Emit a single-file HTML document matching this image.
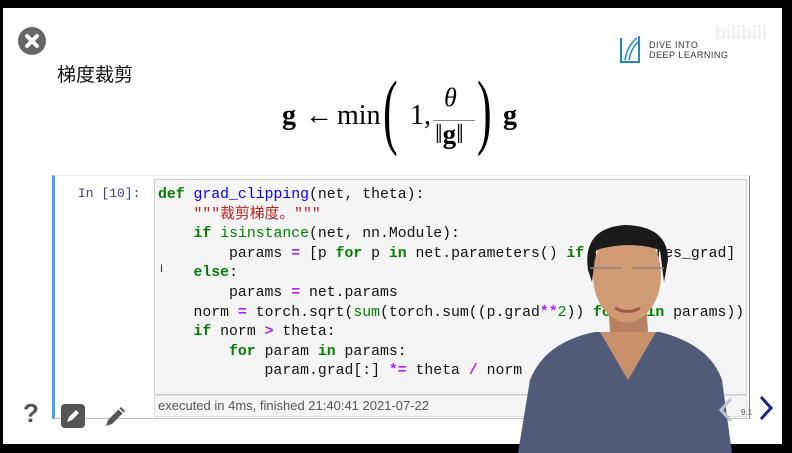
<!DOCTYPE html>
<html><head><meta charset="utf-8"><style>
*{margin:0;padding:0;box-sizing:border-box}
body{width:792px;height:453px;background:#000;position:relative;overflow:hidden;font-family:"Liberation Sans","Noto Sans CJK SC",sans-serif}
#w{position:absolute;left:3px;top:8px;width:779px;height:436px;background:#fff}
.a{position:absolute}
#title{left:57px;top:60px;font-size:19px;color:#111}
.fm{font-family:"Liberation Serif",serif;color:#000;white-space:nowrap;position:absolute}
#cell{left:52px;top:175px;width:698px;height:244px;border-left:3px solid #42a5f5;border-right:1px solid #888;border-bottom:1px solid #bbb;border-top:1px solid #eee}
#inp{left:154px;top:179px;width:593px;height:216px;background:#f5f5f5;border:1px solid #ccc}
#out{left:154px;top:395px;width:593px;height:22px;background:#f5f5f5;border:1px solid #ddd;border-top:1px solid #e0e0e0;font-size:13px;color:#555;padding:2px 3px}
#prompt{left:78px;top:186px;font-family:"Liberation Mono",monospace;font-size:13px;color:#303f9f}
pre{position:absolute;left:158px;top:186px;font-family:"Liberation Mono","Noto Sans CJK SC",monospace;font-size:14.8px;line-height:19.6px;color:#111}
.k{color:#008000;font-weight:bold}.f{color:#0000ff}.s{color:#ba2121}.o{color:#aa22ff;font-weight:bold}.b{color:#008000}
</style></head><body>
<div id="w"></div>
<svg class="a" style="left:18px;top:27px" width="28" height="28"><circle cx="14" cy="14" r="14" fill="#666"/><path d="M9 9L19 19M19 9L9 19" stroke="#fff" stroke-width="4" stroke-linecap="round"/></svg>
<div class="a" id="title">梯度裁剪</div>
<svg class="a" style="left:619px;top:34px" width="22" height="30"><path d="M2 4V28H20V2" fill="none" stroke="#1e8bc3" stroke-width="2"/><path d="M6 26Q8 12 18 4M10 26Q12 14 19 8" fill="none" stroke="#1e8bc3" stroke-width="1.5"/></svg>
<div class="a" style="left:649px;top:40px;font-size:9px;color:#333;line-height:10px;letter-spacing:0.5px">DIVE INTO<br>DEEP LEARNING</div>
<div class="a" style="left:715px;top:23px;font-size:18px;color:#eee;font-weight:bold">bilibili</div>
<div class="fm" style="left:282px;top:100px;font-size:28px"><b>g</b></div>
<div class="fm" style="left:305px;top:100px;font-size:28px">←</div>
<div class="fm" style="left:337px;top:100px;font-size:28px">min</div>
<div class="fm" style="left:383px;top:70px;font-size:44px;transform:scaleY(1.9);transform-origin:top;line-height:44px">(</div>
<div class="fm" style="left:410px;top:100px;font-size:28px">1,</div>
<div class="fm" style="left:444px;top:83px;font-size:26px"><i>θ</i></div>
<div class="a" style="left:433px;top:120px;width:42px;height:1px;background:#888"></div>
<div class="fm" style="left:435px;top:119px;font-size:27px">‖<b>g</b>‖</div>
<div class="fm" style="left:477px;top:70px;font-size:44px;transform:scaleY(1.9);transform-origin:top;line-height:44px">)</div>
<div class="fm" style="left:503px;top:100px;font-size:28px"><b>g</b></div>
<div class="a" id="cell"></div>
<div class="a" id="inp"></div>
<div class="a" id="out">executed in 4ms, finished 21:40:41 2021-07-22</div>
<div class="a" id="prompt">In [10]:</div>
<pre><span class="k">def</span> <span class="f">grad_clipping</span>(net, theta):
    <span class="s">"""裁剪梯度。"""</span>
    <span class="k">if</span> <span class="b">isinstance</span>(net, nn.Module):
        params <span class="o">=</span> [p <span class="k">for</span> p <span class="k">in</span> net.parameters() <span class="k">if</span> p.requires_grad]
    <span class="k">else</span>:
        params <span class="o">=</span> net.params
    norm <span class="o">=</span> torch.sqrt(<span class="b">sum</span>(torch.sum((p.grad<span class="o">**</span><span class="b">2</span>)) <span class="k">for</span> p <span class="k">in</span> params))
    <span class="k">if</span> norm <span class="o">&gt;</span> theta:
        <span class="k">for</span> param <span class="k">in</span> params:
            param.grad[:] <span class="o">*=</span> theta <span class="o">/</span> norm</pre>
<div class="a" style="left:160px;top:263px;font-size:11px;color:#333">I</div>
<div class="a" style="left:23px;top:398px;font-size:26px;font-weight:bold;color:#555">?</div>
<svg class="a" style="left:61px;top:404px" width="24" height="24"><rect width="24" height="24" rx="4" fill="#555"/><path d="M6 18L8 13L15 6L18 9L11 16Z" fill="#fff"/></svg>
<svg class="a" style="left:104px;top:404px" width="24" height="24"><path d="M2 22L4 16L17 3L21 7L8 20Z" fill="#555"/><path d="M15 5L19 9" stroke="#fff" stroke-width="1.5"/></svg>
<!-- person -->
<svg class="a" style="left:500px;top:220px" width="260" height="233">
<path d="M18 233L30 160Q45 122 95 112L160 112Q210 125 222 160L232 233Z" fill="#4f5b78"/>
<path d="M100 112L128 160L156 112Z" fill="#c9906c"/>
<path d="M108 80L110 112L148 112L146 80Z" fill="#b88060"/>
<ellipse cx="127" cy="55" rx="34" ry="47" fill="#d09a75"/>
<path d="M88 50Q82 8 125 5Q168 6 168 40L164 62L160 30Q130 20 96 30L92 62Z" fill="#1a1a1a"/>
<path d="M90 48H122M132 48H164" stroke="#888" stroke-width="1.5"/>
<path d="M115 88Q128 95 140 88" stroke="#a05a4a" stroke-width="3" fill="none"/>
</svg>
<svg class="a" style="left:717px;top:397px" width="18" height="26"><path d="M14 2L4 13L14 24" fill="none" stroke="#c0c4d0" stroke-width="3"/></svg>
<div class="a" style="left:741px;top:408px;font-size:8px;color:#555">9.1</div>
<svg class="a" style="left:758px;top:395px" width="16" height="26"><path d="M3 2L13 13L3 24" fill="none" stroke="#1a237e" stroke-width="3"/></svg>
</body></html>
